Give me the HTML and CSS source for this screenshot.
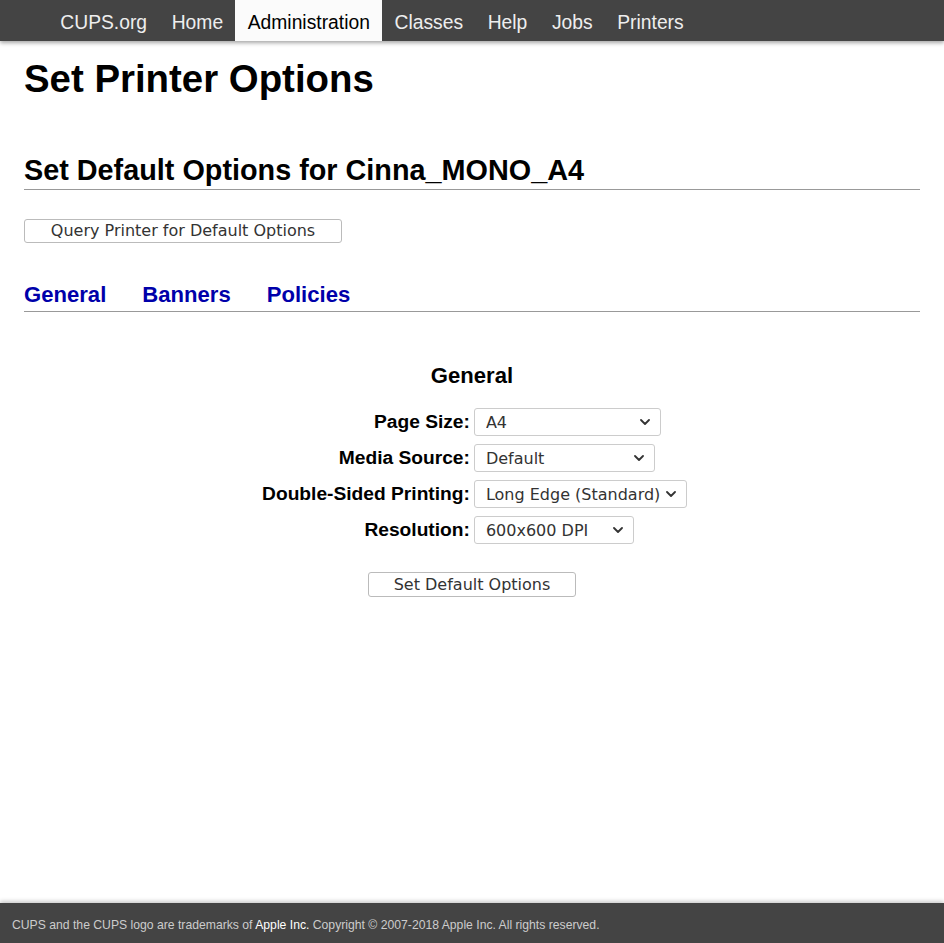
FILE: index.html
```html
<!DOCTYPE html>
<html lang="en">
<head>
<meta charset="utf-8">
<title>Set Printer Options - CUPS</title>
<link rel="stylesheet" href="styles.css">
</head>
<body>
<header class="header">
  <nav class="nav">
    <a class="nav-link" href="#">CUPS.org</a>
    <a class="nav-link" href="#">Home</a>
    <a class="nav-link active" href="#">Administration</a>
    <a class="nav-link" href="#">Classes</a>
    <a class="nav-link" href="#">Help</a>
    <a class="nav-link" href="#">Jobs</a>
    <a class="nav-link" href="#">Printers</a>
  </nav>
</header>
<main class="main">
  <h1 class="title">Set Printer Options</h1>
  <h2 class="subtitle">Set Default Options for Cinna_MONO_A4</h2>
  <div class="query-row">
    <button class="btn btn-query" type="button">Query Printer for Default Options</button>
  </div>
  <div class="tabs">
    <a class="tab" href="#">General</a>
    <a class="tab" href="#">Banners</a>
    <a class="tab" href="#">Policies</a>
  </div>
  <h3 class="section-title">General</h3>
  <div class="options">
    <label class="opt-label">Page Size:</label>
    <select class="opt-select sel-pagesize"><option>A4</option><option>Letter</option><option>Legal</option></select>
    <label class="opt-label">Media Source:</label>
    <select class="opt-select sel-source"><option>Default</option><option>Tray 1</option></select>
    <label class="opt-label">Double-Sided Printing:</label>
    <select class="opt-select sel-duplex"><option>Long Edge (Standard)</option><option>Off</option></select>
    <label class="opt-label">Resolution:</label>
    <select class="opt-select sel-res"><option>600x600 DPI</option></select>
  </div>
  <div class="submit-row">
    <button class="btn btn-submit" type="button">Set Default Options</button>
  </div>
</main>
<footer class="footer">
  CUPS and the CUPS logo are trademarks of <a class="footer-link" href="#">Apple Inc.</a> Copyright &copy; 2007-2018 Apple Inc. All rights reserved.
</footer>
</body>
</html>
```
FILE: styles.css
```css
* { box-sizing: border-box; }
html, body { margin: 0; padding: 0; }
body {
  font-family: "Liberation Sans", Arial, sans-serif;
  color: #000;
  background: #fff;
  min-height: 100vh;
  display: flex;
  flex-direction: column;
}
.header {
  background: #444;
  height: 41px;
  box-shadow: 0 2px 4px rgba(0,0,0,0.35);
  position: relative;
  z-index: 1;
}
.nav {
  display: flex;
  padding-left: 48px;
  height: 41px;
}
.nav-link {
  display: block;
  padding: 0 12.3px;
  line-height: 45px;
  height: 41px;
  font-size: 19.3px;
  color: #eee;
  text-decoration: none;
}
.nav-link.active {
  background: #fbfbfb;
  color: #000;
}
.main {
  padding: 0 24px;
  flex: 1;
}
.title {
  margin: 15px 0 0;
  font-size: 38.4px;
  line-height: 46px;
  font-weight: bold;
}
.subtitle {
  margin: 51px 0 0;
  font-size: 28.8px;
  line-height: 35px;
  font-weight: bold;
  padding-bottom: 1px;
  border-bottom: 1px solid #999;
}
.query-row {
  margin-top: 29px;
}
.btn {
  font-family: "DejaVu Sans", sans-serif;
  font-size: 16px;
  color: #333;
  background: #fff;
  border: 1px solid #bbb;
  border-radius: 3px;
  height: 24px;
  padding: 0;
  line-height: 20px;
  white-space: nowrap;
}
.btn-query { width: 318px; }
.tabs {
  margin-top: 38px;
  display: flex;
  gap: 36px;
  border-bottom: 1px solid #999;
  padding-bottom: 3px;
}
.tab {
  font-size: 22.1px;
  line-height: 27px;
  font-weight: bold;
  color: #00a;
  text-decoration: none;
}
.section-title {
  text-align: center;
  margin: 50px 0 0;
  font-size: 22.1px;
  line-height: 27px;
  font-weight: bold;
}
.options {
  display: grid;
  grid-template-columns: auto auto;
  justify-content: center;
  column-gap: 4px;
  row-gap: 8px;
  margin-top: 19px;
  align-items: center;
  padding-left: 5px;
}
.opt-label {
  text-align: right;
  font-size: 19.2px;
  font-weight: bold;
}
.opt-select {
  -webkit-appearance: none;
  appearance: none;
  font-family: "DejaVu Sans", sans-serif;
  font-size: 16px;
  color: #333;
  background-color: #fff;
  background-image: url("data:image/svg+xml;utf8,<svg xmlns='http://www.w3.org/2000/svg' width='10' height='6' viewBox='0 0 10 6'><path d='M1 1l4 4 4-4' fill='none' stroke='%23333' stroke-width='1.8' stroke-linecap='round' stroke-linejoin='round'/></svg>");
  background-repeat: no-repeat;
  background-position: right 10px center;
  background-size: 10px 6px;
  border: 1px solid #ccc;
  border-radius: 3px;
  height: 28px;
  padding: 0 24px 0 11px;
  justify-self: start;
}
.sel-pagesize { width: 187px; }
.sel-source { width: 181px; }
.sel-duplex { width: 213px; padding-right: 20px; }
.sel-res { width: 160px; }
.submit-row {
  display: flex;
  justify-content: center;
  margin-top: 28px;
}
.btn-submit { width: 208px; height: 25px; }
.footer {
  background: #444;
  color: #ccc;
  font-size: 12.2px;
  height: 40px;
  line-height: 20px;
  padding: 12px 12px 0;
  box-shadow: 0 -2px 4px rgba(0,0,0,0.2);
}
.footer-link {
  color: #fff;
  text-decoration: none;
}
```
